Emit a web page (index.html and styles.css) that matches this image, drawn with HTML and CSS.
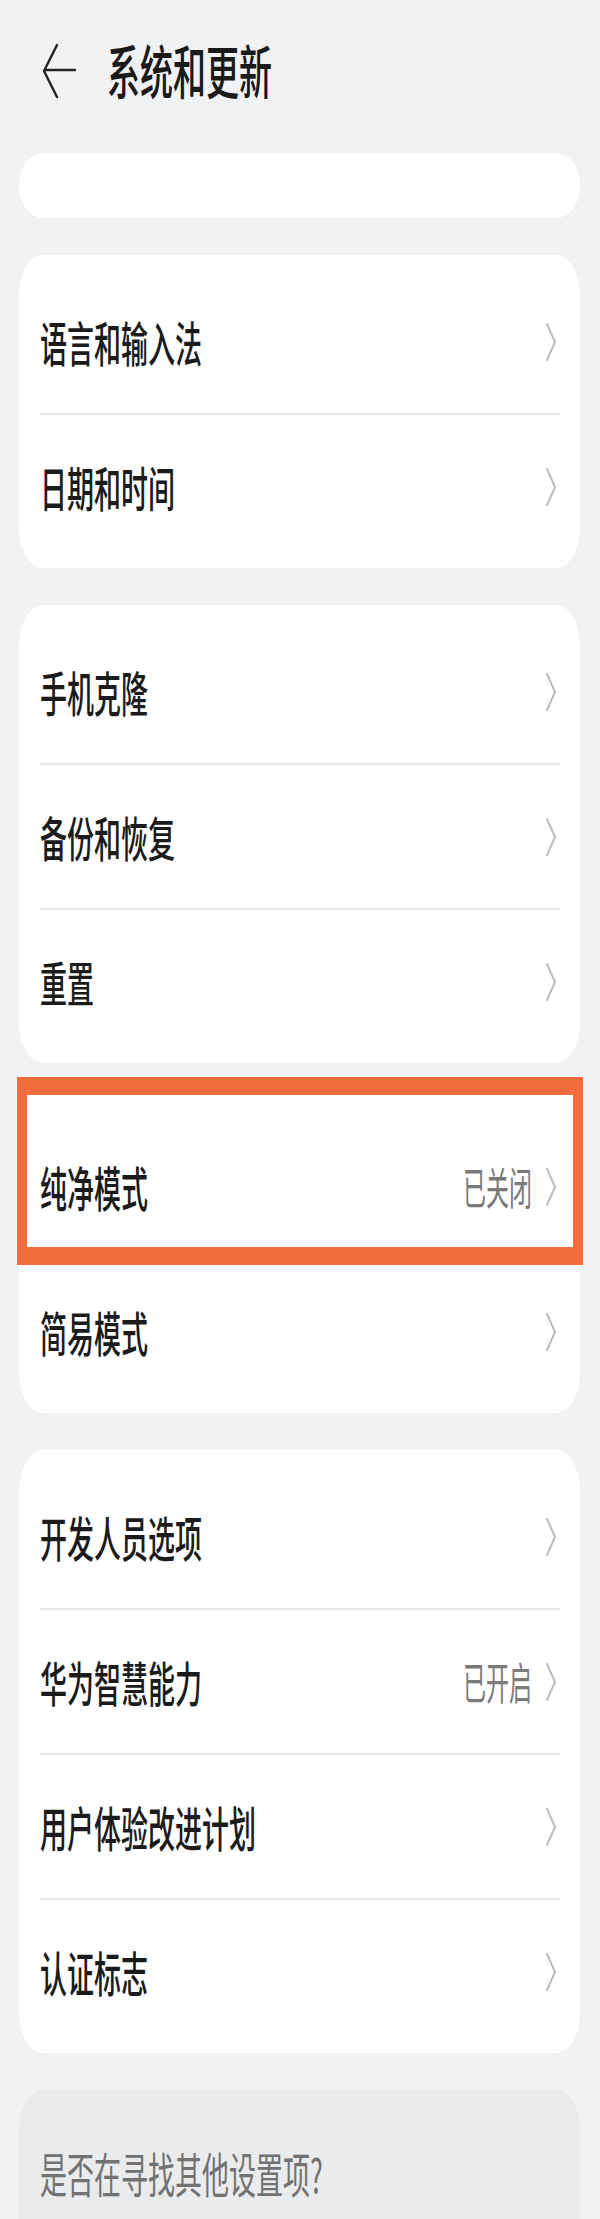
FILE: index.html
```html
<!DOCTYPE html>
<html lang="zh-CN">
<head>
<meta charset="utf-8">
<title>系统和更新</title>
<link rel="stylesheet" href="styles.css">
</head>
<body>
<div class="page">
  <header class="header">
    <svg class="back" width="36" height="56" viewBox="0 0 36 56" aria-hidden="true">
      <path d="M16 2 L3 28 L16 54" fill="none" stroke="#222" stroke-width="2.4" stroke-linecap="round" stroke-linejoin="round"/>
      <path d="M4 27 H34" fill="none" stroke="#222" stroke-width="2.4" stroke-linecap="round"/>
    </svg>
    <span class="title"><span class="stretch">系统和更新</span></span>
  </header>

  <section class="card card-partial"></section>

  <section class="card">
    <div class="row"><span class="label"><span class="stretch">语言和输入法</span></span><svg class="chev" width="12" height="40" viewBox="0 0 12 40"><path d="M2 2 L10 20 L2 38"/></svg></div>
    <div class="row"><span class="label"><span class="stretch">日期和时间</span></span><svg class="chev" width="12" height="40" viewBox="0 0 12 40"><path d="M2 2 L10 20 L2 38"/></svg></div>
  </section>

  <section class="card">
    <div class="row"><span class="label"><span class="stretch">手机克隆</span></span><svg class="chev" width="12" height="40" viewBox="0 0 12 40"><path d="M2 2 L10 20 L2 38"/></svg></div>
    <div class="row"><span class="label"><span class="stretch">备份和恢复</span></span><svg class="chev" width="12" height="40" viewBox="0 0 12 40"><path d="M2 2 L10 20 L2 38"/></svg></div>
    <div class="row"><span class="label"><span class="stretch">重置</span></span><svg class="chev" width="12" height="40" viewBox="0 0 12 40"><path d="M2 2 L10 20 L2 38"/></svg></div>
  </section>

  <section class="card">
    <div class="row row-highlight"><span class="label"><span class="stretch">纯净模式</span></span><span class="value"><span class="stretch">已关闭</span></span><svg class="chev" width="12" height="40" viewBox="0 0 12 40"><path d="M2 2 L10 20 L2 38"/></svg></div>
    <div class="row"><span class="label"><span class="stretch">简易模式</span></span><svg class="chev" width="12" height="40" viewBox="0 0 12 40"><path d="M2 2 L10 20 L2 38"/></svg></div>
  </section>

  <section class="card">
    <div class="row"><span class="label"><span class="stretch">开发人员选项</span></span><svg class="chev" width="12" height="40" viewBox="0 0 12 40"><path d="M2 2 L10 20 L2 38"/></svg></div>
    <div class="row"><span class="label"><span class="stretch">华为智慧能力</span></span><span class="value"><span class="stretch">已开启</span></span><svg class="chev" width="12" height="40" viewBox="0 0 12 40"><path d="M2 2 L10 20 L2 38"/></svg></div>
    <div class="row"><span class="label"><span class="stretch">用户体验改进计划</span></span><svg class="chev" width="12" height="40" viewBox="0 0 12 40"><path d="M2 2 L10 20 L2 38"/></svg></div>
    <div class="row"><span class="label"><span class="stretch">认证标志</span></span><svg class="chev" width="12" height="40" viewBox="0 0 12 40"><path d="M2 2 L10 20 L2 38"/></svg></div>
  </section>

  <section class="card card-grey">
    <div class="row"><span class="label label-grey"><span class="stretch">是否在寻找其他设置项?</span></span></div>
  </section>
</div>
</body>
</html>
```

FILE: styles.css
```css
html, body {
  margin: 0;
  padding: 0;
  background: #f1f2f4;
}

body {
  font-family: "Noto Sans CJK SC", "Noto Sans", "Liberation Sans", sans-serif;
  color: #1b1b1b;
  overflow: hidden;
}

.page {
  display: flex;
  flex-direction: column;
  gap: 37px;
  padding-bottom: 40px;
}

.header {
  height: 153px;
  box-sizing: border-box;
  padding: 43px 0 0 41px;
  display: flex;
  align-items: flex-start;
  margin-bottom: -37px;
}

.back {
  display: block;
  flex: none;
}

.title {
  margin-left: 30px;
  margin-top: 11px;
  font-size: 33px;
  line-height: 33px;
  font-weight: 500;
  color: #1a1a1a;
}

.stretch {
  display: inline-block;
  transform: scaleY(1.75);
  transform-origin: 50% 50%;
  white-space: nowrap;
}

.card {
  margin: 0 20px 0 19px;
  background: #ffffff;
  border-radius: 24px / 40px;
  padding: 14px 0 9px;
}

.card-partial {
  height: 65px;
  padding: 0;
  box-sizing: border-box;
  border-radius: 24px / 32px;
}

.card-grey {
  background: #eaebed;
  padding-top: 10px;
  border-bottom-left-radius: 0;
  border-bottom-right-radius: 0;
}

.row {
  position: relative;
  height: 145px;
  box-sizing: border-box;
  display: flex;
  align-items: center;
  padding: 0 23px 0 21px;
}

.row + .row::after {
  content: "";
  position: absolute;
  left: 21px;
  right: 20px;
  top: -1px;
  height: 2px;
  background: #e6e6e6;
}

.label {
  flex: 1;
  font-size: 27px;
  line-height: 27px;
  font-weight: 500;
  color: #1b1b1b;
}

.label-grey {
  color: #727272;
  font-weight: 400;
}

.value {
  font-size: 23px;
  line-height: 23px;
  color: #7a7a7a;
  margin-right: 13px;
}

.value .stretch {
  transform: scaleY(1.95);
}

.chev {
  flex: none;
  display: block;
}

.chev path {
  fill: none;
  stroke: #bcbcbc;
  stroke-width: 2;
  stroke-linecap: round;
  stroke-linejoin: round;
}

/* annotation box drawn over the highlighted row */
.row-highlight {
  z-index: 1;
}

.row-highlight > * {
  position: relative;
  z-index: 1;
}

.row-highlight::before {
  content: "";
  position: absolute;
  z-index: 0;
  left: -2px;
  right: -3px;
  top: -37px;
  bottom: -6px;
  background: #ffffff;
  border-style: solid;
  border-color: #f26c3c;
  border-width: 18px 10px;
}
```
